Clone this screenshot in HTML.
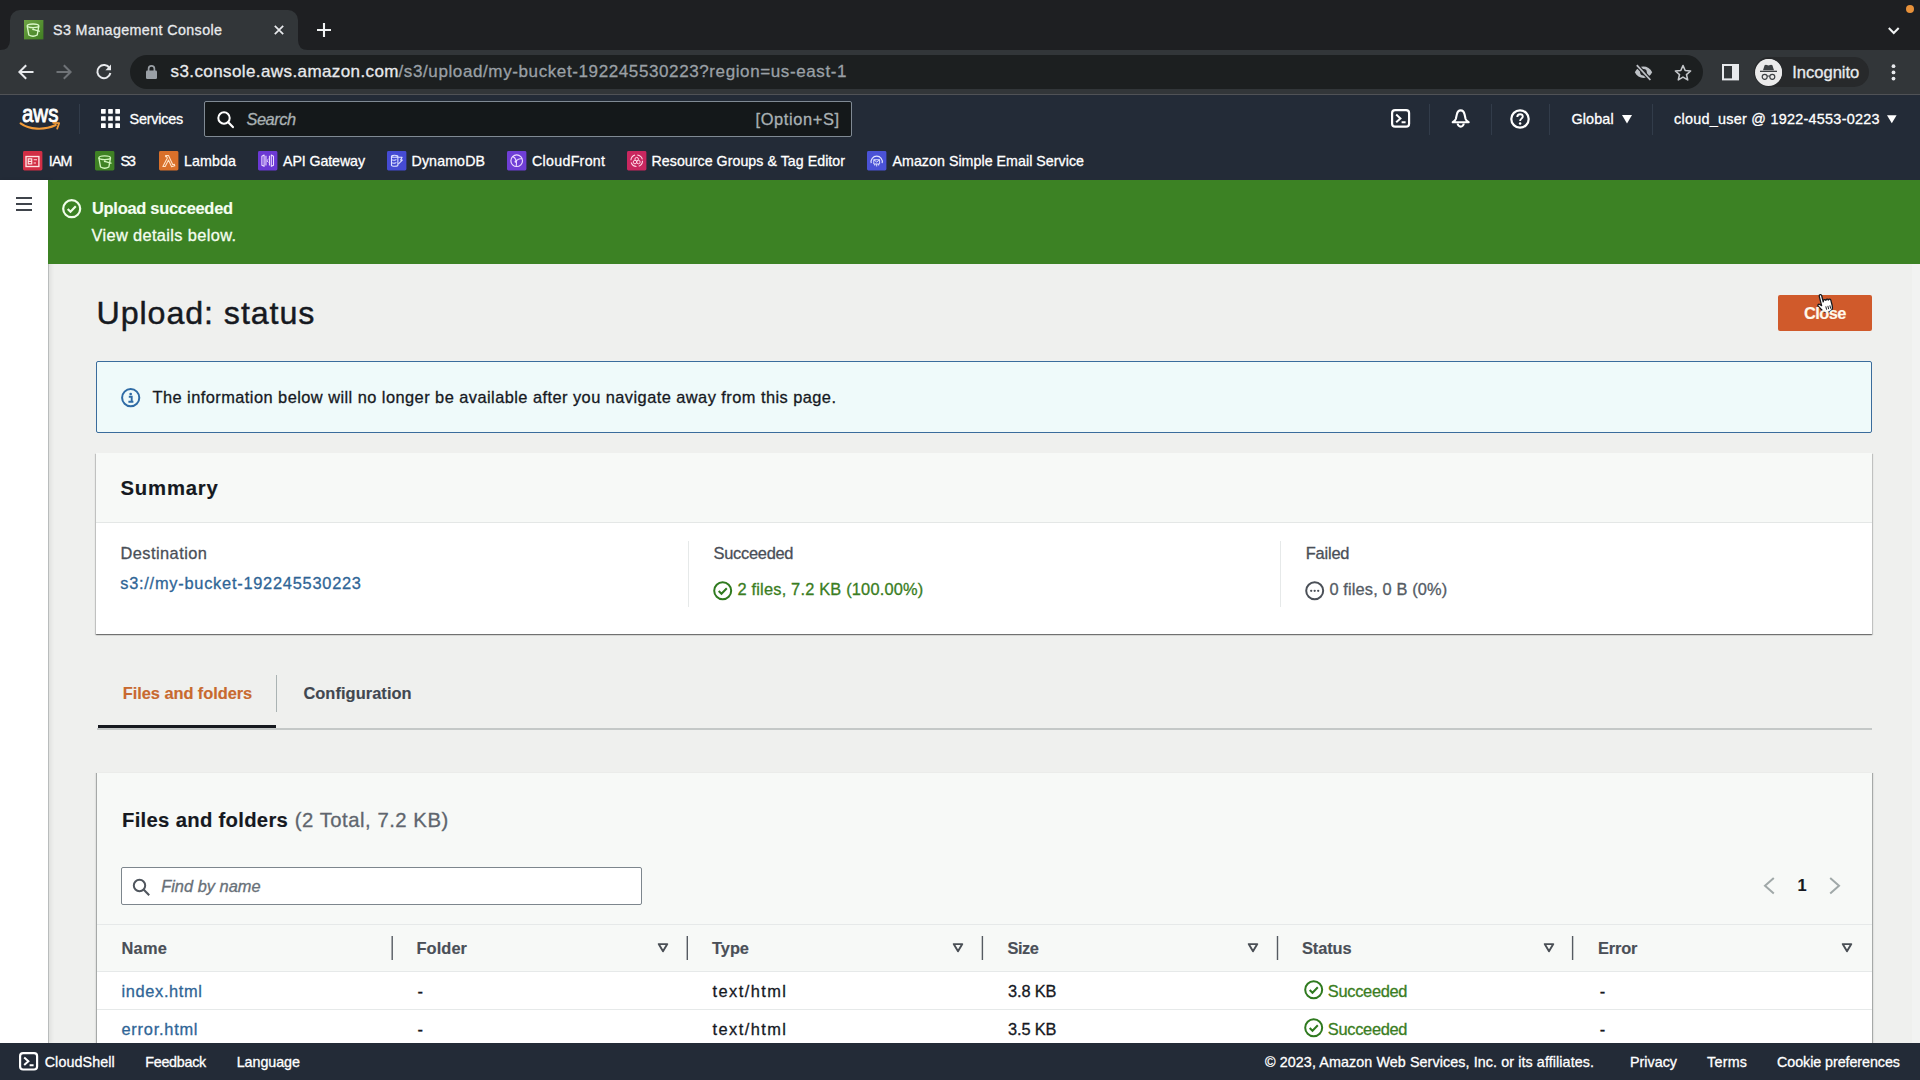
<!DOCTYPE html>
<html lang="en">
<head>
<meta charset="utf-8">
<title>S3 Management Console</title>
<style>
*{box-sizing:border-box;margin:0;padding:0}
html,body{width:1920px;height:1080px;overflow:hidden;background:#eff0ee;font-family:"Liberation Sans",sans-serif}
.b{position:absolute}
.t{position:absolute;white-space:pre;font-family:"Liberation Sans",sans-serif}
svg{position:absolute;overflow:visible}
</style>
</head>
<body>
<!-- ===== Chrome browser frame ===== -->
<div class="b" id="tabstrip" style="left:0;top:0;width:1920px;height:50px;background:#1e1f22"></div>
<div class="b" id="tab" style="left:10px;top:10px;width:288px;height:40px;background:#323639;border-radius:10px 10px 0 0"></div>
<div class="b" id="toolbar" style="left:0;top:50px;width:1920px;height:45px;background:#323639;border-bottom:1px solid #505256"></div>
<div class="b" id="omnibox" style="left:130px;top:55px;width:1573px;height:34px;border-radius:17px;background:#1c1f20"></div>
<div class="b" id="incog" style="left:1754px;top:57px;width:115px;height:30px;border-radius:15px;background:#27292b"></div>
<div class="b" id="incogc" style="left:1755.5px;top:59px;width:26px;height:26px;border-radius:13px;background:#e8eaed"></div>

<!-- ===== AWS nav ===== -->
<div class="b" id="awsnav" style="left:0;top:95px;width:1920px;height:85px;background:#232b37"></div>
<div class="b" id="search" style="left:204px;top:101px;width:647.500px;height:36px;background:#14181a;border:1px solid #808a94;border-radius:2px"></div>

<!-- ===== page ===== -->
<div class="b" id="sidebar" style="left:0;top:180px;width:49px;height:863px;background:#fff;border-right:1px solid #b9bcbc;box-shadow:2px 0 4px rgba(0,0,0,.07)"></div>
<div class="b" id="flash" style="left:48px;top:180px;width:1872px;height:84px;background:#3c8224"></div>
<div class="b" id="closebtn" style="left:1778px;top:295px;width:94px;height:36px;background:#d05a2b;border-radius:2px"></div>
<div class="b" id="info" style="left:96px;top:361px;width:1776px;height:72px;background:#effafa;border:1px solid #3a6c9c;border-radius:2px"></div>

<div class="b" id="sumcont" style="left:96px;top:453px;width:1776px;height:181px;background:#fff;box-shadow:0 1px 1px 0 rgba(0,0,0,.36),1px 1px 1px 0 rgba(0,0,0,.14),-1px 1px 1px 0 rgba(0,0,0,.14)"></div>
<div class="b" id="sumhead" style="left:96px;top:453px;width:1776px;height:70px;background:#f7f9f7;border-bottom:1px solid #e4e7e6"></div>
<div class="b" style="left:688px;top:541px;width:1px;height:66px;background:#e6e9e9"></div>
<div class="b" style="left:1280px;top:541px;width:1px;height:66px;background:#e6e9e9"></div>

<!-- tabs -->
<div class="b" style="left:97px;top:728px;width:1775px;height:2px;background:#c4c8c7"></div>
<div class="b" style="left:98px;top:725px;width:178px;height:3px;background:#16191f"></div>
<div class="b" style="left:276px;top:675px;width:1px;height:37px;background:#aab3b3"></div>

<!-- files container -->
<div class="b" id="fcont" style="left:97px;top:773px;width:1775px;height:280px;background:#f7f9f7;box-shadow:-1px 0 0 0 #a6a9a8,1px 0 0 0 #a6a9a8,-2px 0 1px 0 rgba(0,0,0,.05),2px 0 1px 0 rgba(0,0,0,.05)"></div>
<div class="b" id="finput" style="left:121px;top:867px;width:521px;height:38px;background:#fff;border:1px solid #7d868d;border-radius:2px"></div>
<div class="b" style="left:97px;top:924px;width:1775px;height:1px;background:#e6e9e9"></div>
<div class="b" style="left:97px;top:971px;width:1775px;height:1px;background:#e6e9e9"></div>
<div class="b" style="left:97px;top:972px;width:1775px;height:71px;background:#fff"></div>
<div class="b" style="left:97px;top:1009px;width:1775px;height:1px;background:#e6e9e9"></div>
<!-- column dividers -->

<svg style="left:0;top:936px" width="1920" height="24" viewBox="0 0 1920 24"><path d="M392.2 0v24M687.3 0v24M982.4 0v24M1277.5 0v24M1572.6 0v24" stroke="#565b62" stroke-width="1.4" fill="none"/></svg>
<div class="b" style="left:1912px;top:264px;width:8px;height:779px;background:#f2f3f2"></div>
<!-- footer -->
<div class="b" id="footer" style="left:0;top:1043px;width:1920px;height:37px;background:#232b37"></div>

<!-- ===== Chrome icons ===== -->
<!-- tab bottom flares -->
<svg style="left:0;top:40px" width="310" height="10" viewBox="0 0 310 10"><path d="M0 10 Q10 10 10 0 L10 10Z M298 0 Q298 10 308 10 L298 10Z" fill="#323639"/></svg>
<!-- favicon S3 -->
<svg style="left:24px;top:20.200px" width="19.400" height="19.400" viewBox="0 0 20 20"><defs><linearGradient id="fg" x1="0" y1="0" x2="1" y2="1"><stop offset="0" stop-color="#6fa544"/><stop offset="1" stop-color="#3f7d22"/></linearGradient></defs><rect width="20" height="20" fill="url(#fg)"/><ellipse cx="9.300" cy="6" rx="6" ry="1.900" fill="none" stroke="#d9f7c8" stroke-width="1.400"/><path d="M3.300 6.200L5 15.500Q9.300 18 13.600 15.500L15.300 6.200" fill="none" stroke="#d9f7c8" stroke-width="1.400" stroke-linejoin="round"/><path d="M9.400 9.600l6.900 2.100" stroke="#d9f7c8" stroke-width="1.400" fill="none"/><circle cx="9.400" cy="9.600" r="1" fill="#d9f7c8"/></svg>
<!-- tab close -->
<svg style="left:273.5px;top:25px" width="10" height="10" viewBox="0 0 10 10"><path d="M.8.8l8.4 8.4M9.2.8L.8 9.2" stroke="#e8eaed" stroke-width="1.7" fill="none"/></svg>
<!-- new tab plus -->
<svg style="left:317px;top:23px" width="14" height="14" viewBox="0 0 14 14"><path d="M7 0v14M0 7h14" stroke="#f1f3f4" stroke-width="2.1" fill="none"/></svg>
<!-- tab search chevron -->
<svg style="left:1888px;top:26.5px" width="11.5" height="7.5" viewBox="0 0 11.5 7.5"><path d="M.8 1l4.95 5L10.7 1" stroke="#f1f3f4" stroke-width="2" fill="none"/></svg>
<!-- orange mic dot -->
<div class="b" style="left:1906.4px;top:5.4px;width:8px;height:8px;border-radius:4px;background:#e8913a"></div>
<!-- back -->
<svg style="left:18px;top:64px" width="16" height="16" viewBox="0 0 16 16"><path d="M15.5 8H1.6M8.2 1.2L1.4 8l6.8 6.8" stroke="#e8eaed" stroke-width="2" fill="none"/></svg>
<!-- forward (disabled) -->
<svg style="left:56.3px;top:64px" width="16" height="16" viewBox="0 0 16 16"><path d="M.5 8h13.9M7.8 1.2L14.6 8l-6.8 6.8" stroke="#6f7377" stroke-width="2" fill="none"/></svg>
<!-- reload -->
<svg style="left:95px;top:63px" width="18" height="18" viewBox="0 0 18 18"><path d="M14.6 5.2A6.6 6.6 0 1 0 15.4 10" stroke="#e8eaed" stroke-width="2" fill="none"/><path d="M16 1.6v5.6h-5.6z" fill="#e8eaed"/></svg>
<!-- lock -->
<svg style="left:146px;top:65px" width="11" height="14" viewBox="0 0 11 14"><rect x="0" y="5.6" width="11" height="8.4" rx="1.2" fill="#9aa0a6"/><path d="M2.6 6V3.8a2.9 2.9 0 0 1 5.8 0V6" stroke="#9aa0a6" stroke-width="1.7" fill="none"/></svg>
<!-- eye off -->
<svg style="left:1634px;top:63.5px" width="19" height="17" viewBox="0 0 19 17"><path d="M.8 8.3C2.6 4.6 6 2.6 9.5 2.6s6.9 2 8.7 5.7c-1.8 3.7-5.2 5.7-8.7 5.7S2.6 12 .8 8.3z" fill="#bdc1c6"/><circle cx="9.5" cy="8.3" r="3.3" fill="#1f2023"/><circle cx="9.5" cy="8.3" r="1.7" fill="#bdc1c6"/><path d="M2.5.8l14 15.2" stroke="#1f2023" stroke-width="4"/><path d="M2.8 1.2l13.6 14.8" stroke="#bdc1c6" stroke-width="1.7"/></svg>
<!-- star -->
<svg style="left:1673.5px;top:64px" width="18" height="17" viewBox="0 0 18 17"><path d="M9 1.5l2.2 5 5.4.5-4.1 3.6 1.2 5.3L9 13.1l-4.7 2.8 1.2-5.3L1.4 7l5.4-.5z" fill="none" stroke="#c4c7ca" stroke-width="1.6" stroke-linejoin="round"/></svg>
<!-- side panel -->
<svg style="left:1722px;top:63.8px" width="17" height="16.4" viewBox="0 0 17 16.4"><rect x="1" y="1" width="15" height="14.4" fill="none" stroke="#e8eaed" stroke-width="2"/><rect x="10" y="1" width="6" height="14.4" fill="#e8eaed"/></svg>
<!-- incognito glyph -->
<svg style="left:1755.3px;top:58.6px" width="27" height="27" viewBox="0 0 27 27"><circle cx="13.5" cy="13.5" r="13.5" fill="#ebebeb"/><path d="M9.6 6.2l1.3-.5 2.6.8 2.6-.8 1.3.5 1.6 5H8z" fill="#3c4043"/><rect x="5" y="11.7" width="17" height="1.3" fill="#3c4043"/><circle cx="9.7" cy="17.8" r="2.5" fill="none" stroke="#3c4043" stroke-width="1.2"/><circle cx="17.3" cy="17.8" r="2.5" fill="none" stroke="#3c4043" stroke-width="1.2"/><path d="M12.2 17.3q1.3-.7 2.6 0" stroke="#3c4043" stroke-width="1.1" fill="none"/></svg>
<!-- kebab -->
<svg style="left:1890.9px;top:64px" width="5" height="17" viewBox="0 0 5 17"><circle cx="2.5" cy="2.2" r="1.9" fill="#e8eaed"/><circle cx="2.5" cy="8.4" r="1.9" fill="#e8eaed"/><circle cx="2.5" cy="14.6" r="1.9" fill="#e8eaed"/></svg>

<!-- ===== AWS nav icons ===== -->
<!-- aws logo: text + smile -->
<span class="t" style="left:21.8px;top:98.9px;font-size:23.5px;line-height:30px;font-weight:400;letter-spacing:0;color:#fff;-webkit-text-stroke:.85px #fff;transform:scaleX(.87);transform-origin:0 0">aws</span>
<svg style="left:20px;top:121.5px" width="41" height="10" viewBox="0 0 41 10"><path d="M.6 1.4C9 7.6 24 8.6 35.8 3" stroke="#f29b38" stroke-width="2.1" fill="none" stroke-linecap="round"/><path d="M33.2.9l5.9.3-1.9 5.4" stroke="#f29b38" stroke-width="1.8" fill="none" stroke-linejoin="round" stroke-linecap="round"/></svg>
<div class="b" style="left:79px;top:104px;width:1px;height:30px;background:#323c4a"></div>
<!-- services grid -->
<svg style="left:101px;top:109.2px" width="19" height="19" viewBox="0 0 19 19"><g fill="#fff"><rect x="0" y="0" width="4.7" height="4.7" rx=".6"/><rect x="7.15" y="0" width="4.7" height="4.7" rx=".6"/><rect x="14.3" y="0" width="4.7" height="4.7" rx=".6"/><rect x="0" y="7.15" width="4.7" height="4.7" rx=".6"/><rect x="7.15" y="7.15" width="4.7" height="4.7" rx=".6"/><rect x="14.3" y="7.15" width="4.7" height="4.7" rx=".6"/><rect x="0" y="14.3" width="4.7" height="4.7" rx=".6"/><rect x="7.15" y="14.3" width="4.7" height="4.7" rx=".6"/><rect x="14.3" y="14.3" width="4.7" height="4.7" rx=".6"/></g></svg>
<!-- nav search icon -->
<svg style="left:216px;top:110px" width="19" height="19" viewBox="0 0 19 19"><circle cx="8" cy="8" r="5.7" fill="none" stroke="#fff" stroke-width="2"/><path d="M12.200 12.200l4.700 4.900" stroke="#fff" stroke-width="2.200" stroke-linecap="round"/></svg>
<!-- cloudshell -->
<svg style="left:1391px;top:109.4px" width="19.2" height="18.8" viewBox="0 0 19.2 18.8"><rect x="1.1" y="1.1" width="17" height="16.6" rx="3" fill="none" stroke="#fff" stroke-width="2.2"/><path d="M5.2 5.6l4.2 3.8-4.2 3.8M10.6 13.3h4" stroke="#fff" stroke-width="2" fill="none"/></svg>
<div class="b" style="left:1429px;top:104px;width:1px;height:31px;background:#323c4a"></div>
<!-- bell -->
<svg style="left:1450.8px;top:108.7px" width="19.4" height="19.6" viewBox="0 0 19.4 19.6"><path d="M9.700 1.400C7.400 1.400 6.300 3.200 5.800 5.600L4.800 10C4.400 11.300 3.200 12.300 1.700 13.200H17.700C16.200 12.300 15 11.300 14.600 10L13.600 5.600C13.100 3.200 12 1.400 9.700 1.400Z" fill="none" stroke="#fff" stroke-width="2.1" stroke-linejoin="round"/><path d="M6.7 14.4a3 3.2 0 0 0 6 0" fill="none" stroke="#fff" stroke-width="2.1"/></svg>
<div class="b" style="left:1490.6px;top:104px;width:1px;height:31px;background:#323c4a"></div>
<!-- help -->
<svg style="left:1510.3px;top:109.2px" width="20" height="20" viewBox="0 0 20 20"><circle cx="10" cy="10" r="8.7" fill="none" stroke="#fff" stroke-width="2.2"/><path d="M7.3 7.9c0-1.7 1.2-2.7 2.8-2.7s2.7 1 2.7 2.4c0 2-2.7 2.1-2.7 4.3" fill="none" stroke="#fff" stroke-width="1.9"/><circle cx="10.1" cy="14.6" r="1.25" fill="#fff"/></svg>
<div class="b" style="left:1549.2px;top:104px;width:1px;height:31px;background:#323c4a"></div>
<svg style="left:1621.5px;top:114.5px" width="10" height="8.5" viewBox="0 0 10 8.5"><path d="M0 0h10L5 8.5z" fill="#fff"/></svg>
<div class="b" style="left:1651.7px;top:104px;width:1px;height:31px;background:#323c4a"></div>
<svg style="left:1887.300px;top:114.500px" width="9.600" height="8.500" viewBox="0 0 10 8.5"><path d="M0 0h10L5 8.5z" fill="#fff"/></svg>

<!-- ===== favorites icons ===== -->
<svg style="left:23.1px;top:151px" width="19.4" height="19.4" viewBox="0 0 20 20"><rect width="20" height="20" rx="1.5" fill="#d22e45"/><rect x="3.100" y="5.700" width="13.300" height="10.300" fill="none" stroke="#ffe3e3" stroke-width="1.400"/><path d="M5.400 8.200h3.600v5H5.400zM5.400 10.700h3.600M11 9h3.400M11 12.400h2.400" stroke="#ffe3e3" stroke-width="1.2" fill="none"/></svg>
<svg style="left:95.200px;top:151px" width="19.400" height="19.400" viewBox="0 0 20 20"><rect width="20" height="20" rx="1.500" fill="#3f8224"/><g transform="translate(.7 1)"><ellipse cx="9.300" cy="6" rx="6" ry="1.900" fill="none" stroke="#d2f5bd" stroke-width="1.400"/><path d="M3.300 6.200L5 15.500Q9.300 18 13.600 15.500L15.300 6.200" fill="none" stroke="#d2f5bd" stroke-width="1.400" stroke-linejoin="round"/><path d="M9.400 9.600l6.900 2.100" stroke="#d2f5bd" stroke-width="1.400" fill="none"/><circle cx="9.400" cy="9.600" r="1" fill="#d2f5bd"/></g></svg>
<svg style="left:158.5px;top:151px" width="19.4" height="19.4" viewBox="0 0 20 20"><rect width="20" height="20" rx="1.5" fill="#d9702a"/><path d="M6.8 4.6h3l4.4 9.6 1.6-.5.5 1.6-3.3 1-3.2-7-3.4 6.7H4l4.6-8.9-.7-1.3H6.8z" fill="none" stroke="#ffe2c6" stroke-width="1.1" stroke-linejoin="round"/></svg>
<svg style="left:257.8px;top:151px" width="19.4" height="19.4" viewBox="0 0 20 20"><rect width="20" height="20" rx="1.5" fill="#6b38d4"/><path d="M6.3 4.2L4 5.4v9.2l2.3 1.2zM13.7 4.2L16 5.4v9.2l-2.3 1.2zM8.2 5v10M11.8 5v10" stroke="#ecdcff" stroke-width="1.1" fill="none" stroke-linejoin="round"/><path d="M10.8 8.3L9.1 10l1.7 1.7" stroke="#ecdcff" stroke-width="1" fill="none"/></svg>
<svg style="left:387px;top:151px" width="19.4" height="19.4" viewBox="0 0 20 20"><rect width="20" height="20" rx="1.5" fill="#454bd3"/><path d="M4.6 5.4c0-1.4 6.6-1.4 6.6 0v9.2c0 1.4-6.6 1.4-6.6 0zM4.6 5.4c0 1.4 6.6 1.4 6.6 0M4.6 8.6c0 1.3 4.8 1.3 4.8 0M4.6 11.7c0 1.3 4.8 1.3 4.8 0" stroke="#dfe2ff" stroke-width="1.1" fill="none"/><path d="M11.4 6.5h4.2l-1.6 2.8h1.8l-4.2 4.2" stroke="#dfe2ff" stroke-width="1.1" fill="none" stroke-linejoin="round"/></svg>
<svg style="left:506.7px;top:151px" width="19.4" height="19.4" viewBox="0 0 20 20"><rect width="20" height="20" rx="1.5" fill="#6f3ed6"/><circle cx="10" cy="10" r="6" fill="none" stroke="#ecdcff" stroke-width="1.2"/><path d="M6 5.6c3 1.5 4.5 4.4 3.5 10.2M15.6 8c-3.4-.4-5.6 1-6.6 3.4" stroke="#ecdcff" stroke-width="1.1" fill="none"/><circle cx="9" cy="11" r="1.2" fill="#ecdcff"/></svg>
<svg style="left:626.5px;top:151px" width="19.4" height="19.4" viewBox="0 0 20 20"><rect width="20" height="20" rx="1.5" fill="#c9275f"/><circle cx="10" cy="10" r="6" fill="none" stroke="#ffd9e6" stroke-width="1.1" stroke-dasharray="7 2.4"/><circle cx="10" cy="8.4" r="1.8" fill="none" stroke="#ffd9e6" stroke-width="1"/><circle cx="8.2" cy="11.4" r="1.8" fill="none" stroke="#ffd9e6" stroke-width="1"/><circle cx="11.8" cy="11.4" r="1.8" fill="none" stroke="#ffd9e6" stroke-width="1"/></svg>
<svg style="left:867px;top:151px" width="19.4" height="19.4" viewBox="0 0 20 20"><rect width="20" height="20" rx="1.5" fill="#4a52d6"/><path d="M4.4 12.6a5.8 5.8 0 1 1 11.2 0" fill="none" stroke="#dfe2ff" stroke-width="1.2"/><path d="M7 9h6v4.4H7zM7 9l3 2.4L13 9M8 15v-1.6M10 16v-2.6M12 15v-1.6" stroke="#dfe2ff" stroke-width="1" fill="none"/></svg>

<!-- ===== page icons ===== -->
<!-- hamburger -->
<div class="b" style="left:16px;top:197px;width:16.2px;height:2.1px;background:#3f444b"></div>
<div class="b" style="left:16px;top:203px;width:16.2px;height:2.1px;background:#3f444b"></div>
<div class="b" style="left:16px;top:209px;width:16.2px;height:2.1px;background:#3f444b"></div>
<!-- flash check -->
<svg style="left:62.2px;top:199.1px" width="19.4" height="19.4" viewBox="0 0 19.4 19.4"><circle cx="9.7" cy="9.7" r="8.5" fill="none" stroke="#f1fdea" stroke-width="2.2"/><path d="M5.7 10l2.8 2.8 5.3-5.5" fill="none" stroke="#f1fdea" stroke-width="2.2"/></svg>
<!-- info -->
<svg style="left:121px;top:387.600px" width="19.4" height="19.4" viewBox="0 0 19.4 19.4"><circle cx="9.7" cy="9.7" r="8.6" fill="none" stroke="#2f6ba5" stroke-width="2"/><circle cx="9.7" cy="6" r="1.35" fill="#2f6ba5"/><path d="M7.8 8.7h2.9v4.8M7.4 13.7h5" stroke="#2f6ba5" stroke-width="1.9" fill="none"/></svg>
<!-- summary success -->
<svg style="left:713px;top:580.7px" width="19.4" height="19.4" viewBox="0 0 19.4 19.4"><circle cx="9.7" cy="9.7" r="8.5" fill="none" stroke="#2f7a1f" stroke-width="2"/><path d="M5.7 10l2.8 2.8 5.3-5.5" fill="none" stroke="#2f7a1f" stroke-width="2"/></svg>
<!-- summary pending -->
<svg style="left:1304.9px;top:580.6px" width="19.4" height="19.4" viewBox="0 0 19.4 19.4"><circle cx="9.7" cy="9.7" r="8.5" fill="none" stroke="#4b5058" stroke-width="2"/><circle cx="6.200" cy="9.800" r="1.150" fill="#4b5058"/><circle cx="9.700" cy="9.800" r="1.150" fill="#4b5058"/><circle cx="13.200" cy="9.800" r="1.150" fill="#4b5058"/></svg>
<!-- find search -->
<svg style="left:131.5px;top:877.5px" width="19" height="19" viewBox="0 0 19 19"><circle cx="7.5" cy="7.5" r="5.7" fill="none" stroke="#50565e" stroke-width="2"/><path d="M11.6 11.6l5.6 5.6" stroke="#50565e" stroke-width="2.1"/></svg>
<!-- pagination -->
<svg style="left:1762.5px;top:877px" width="12" height="17.5" viewBox="0 0 12 17.5"><path d="M10.8 1L2 8.75l8.8 7.75" fill="none" stroke="#a0a8a8" stroke-width="2"/></svg>
<svg style="left:1828.5px;top:877px" width="12" height="17.5" viewBox="0 0 12 17.5"><path d="M1.2 1L10 8.75 1.2 16.5" fill="none" stroke="#a0a8a8" stroke-width="2"/></svg>
<!-- sort triangles -->
<svg style="left:657px;top:943px" width="12" height="10" viewBox="0 0 12 10"><path d="M1.7 1.1h8.6L6 8.3z" fill="none" stroke="#4a4f55" stroke-width="1.9" stroke-linejoin="round"/></svg>
<svg style="left:952px;top:943px" width="12" height="10" viewBox="0 0 12 10"><path d="M1.7 1.1h8.6L6 8.3z" fill="none" stroke="#4a4f55" stroke-width="1.9" stroke-linejoin="round"/></svg>
<svg style="left:1247px;top:943px" width="12" height="10" viewBox="0 0 12 10"><path d="M1.7 1.1h8.6L6 8.3z" fill="none" stroke="#4a4f55" stroke-width="1.9" stroke-linejoin="round"/></svg>
<svg style="left:1543px;top:943px" width="12" height="10" viewBox="0 0 12 10"><path d="M1.7 1.1h8.6L6 8.3z" fill="none" stroke="#4a4f55" stroke-width="1.9" stroke-linejoin="round"/></svg>
<svg style="left:1840.6px;top:943px" width="12" height="10" viewBox="0 0 12 10"><path d="M1.7 1.1h8.6L6 8.3z" fill="none" stroke="#4a4f55" stroke-width="1.9" stroke-linejoin="round"/></svg>
<!-- row success icons -->
<svg style="left:1303.6px;top:980.1px" width="19.4" height="19.4" viewBox="0 0 19.4 19.4"><circle cx="9.7" cy="9.7" r="8.5" fill="none" stroke="#2f7a1f" stroke-width="2"/><path d="M5.7 10l2.8 2.8 5.3-5.5" fill="none" stroke="#2f7a1f" stroke-width="2"/></svg>
<svg style="left:1303.6px;top:1018.4px" width="19.4" height="19.4" viewBox="0 0 19.4 19.4"><circle cx="9.7" cy="9.7" r="8.5" fill="none" stroke="#2f7a1f" stroke-width="2"/><path d="M5.7 10l2.8 2.8 5.3-5.5" fill="none" stroke="#2f7a1f" stroke-width="2"/></svg>
<!-- footer cloudshell -->
<svg style="left:19.2px;top:1052.4px" width="19.200" height="18.600" viewBox="0 0 19.2 18.6"><rect x="1.100" y="1.100" width="17" height="16.400" rx="3" fill="none" stroke="#fff" stroke-width="2.200"/><path d="M5.200 5.500l4.200 3.800-4.200 3.800M10.600 13.200h4" stroke="#fff" stroke-width="2" fill="none"/></svg>
<!-- pointer cursor -->
<svg style="left:1815px;top:292.500px" width="20" height="22" viewBox="0 0 20 22"><g transform="rotate(-14 10 11)"><path d="M6.300 2.200c0-1.800 2.500-1.800 2.500 0v6.200l.4-.8c.5-1.400 2.300-1.200 2.400.1l.3-.3c.8-1.100 2.300-.7 2.300.5l.3-.2c.9-.8 2.100-.3 2.100.9v5.500c0 3.400-1.600 5.600-5.200 5.600-2.900 0-4.300-1.100-5.700-3.400L2.900 11.600c-.8-1.400.8-2.500 1.900-1.400l1.500 1.600z" fill="#fff" stroke="#16191f" stroke-width="1.300" stroke-linejoin="round"/><path d="M10.200 13.500v3.400M12.300 13.500v3.400M14.400 13.500v3.400" stroke="#16191f" stroke-width=".9"/></g></svg>

<span class="t" style="left:53px;top:20.05px;font-size:14.3px;line-height:20px;letter-spacing:0.383px;color:#e8eaed;-webkit-text-stroke:0.3px #e8eaed;">S3 Management Console</span>
<span class="t" style="left:170.5px;top:59.51px;font-size:17px;line-height:24px;letter-spacing:0.405px;color:#e8eaed;-webkit-text-stroke:0.3px #e8eaed;">s3.console.aws.amazon.com</span>
<span class="t" style="left:398.5px;top:59.51px;font-size:17px;line-height:24px;letter-spacing:0.608px;color:#9aa0a6;-webkit-text-stroke:0.3px #9aa0a6;">/s3/upload/my-bucket-192245530223?region=us-east-1</span>
<span class="t" style="left:1792.3px;top:61.15px;font-size:16.6px;line-height:23px;letter-spacing:-0.045px;color:#e8eaed;-webkit-text-stroke:0.3px #e8eaed;">Incognito</span>
<span class="t" style="left:129.6px;top:109.11px;font-size:14.4px;line-height:20px;letter-spacing:-0.227px;color:#ffffff;-webkit-text-stroke:0.3px #ffffff;">Services</span>
<span class="t" style="left:246.5px;top:108.02px;font-size:16.4px;line-height:23px;letter-spacing:-0.487px;color:#a9b1b3;font-style:italic;-webkit-text-stroke:0.3px #a9b1b3;">Search</span>
<span class="t" style="left:755.5px;top:108.02px;font-size:16.4px;line-height:23px;letter-spacing:0.622px;color:#a9b1b3;-webkit-text-stroke:0.3px #a9b1b3;">[Option+S]</span>
<span class="t" style="left:1571.4px;top:109.11px;font-size:14.4px;line-height:20px;letter-spacing:0.118px;color:#ffffff;-webkit-text-stroke:0.3px #ffffff;">Global</span>
<span class="t" style="left:1674px;top:109.11px;font-size:14.4px;line-height:20px;letter-spacing:0.264px;color:#ffffff;-webkit-text-stroke:0.3px #ffffff;">cloud_user @ 1922-4553-0223</span>
<span class="t" style="left:48.75px;top:150.98px;font-size:14.2px;line-height:20px;letter-spacing:-0.792px;color:#ffffff;-webkit-text-stroke:0.3px #ffffff;">IAM</span>
<span class="t" style="left:120.5px;top:150.98px;font-size:14.2px;line-height:20px;letter-spacing:-1.859px;color:#ffffff;-webkit-text-stroke:0.3px #ffffff;">S3</span>
<span class="t" style="left:184px;top:150.98px;font-size:14.2px;line-height:20px;letter-spacing:0.144px;color:#ffffff;-webkit-text-stroke:0.3px #ffffff;">Lambda</span>
<span class="t" style="left:283px;top:150.98px;font-size:14.2px;line-height:20px;letter-spacing:-0.081px;color:#ffffff;-webkit-text-stroke:0.3px #ffffff;">API Gateway</span>
<span class="t" style="left:411.5px;top:150.98px;font-size:14.2px;line-height:20px;letter-spacing:0.136px;color:#ffffff;-webkit-text-stroke:0.3px #ffffff;">DynamoDB</span>
<span class="t" style="left:532px;top:150.98px;font-size:14.2px;line-height:20px;letter-spacing:0.312px;color:#ffffff;-webkit-text-stroke:0.3px #ffffff;">CloudFront</span>
<span class="t" style="left:651.5px;top:150.98px;font-size:14.2px;line-height:20px;letter-spacing:0.050px;color:#ffffff;-webkit-text-stroke:0.3px #ffffff;">Resource Groups &amp; Tag Editor</span>
<span class="t" style="left:892.5px;top:150.98px;font-size:14.2px;line-height:20px;letter-spacing:0.056px;color:#ffffff;-webkit-text-stroke:0.3px #ffffff;">Amazon Simple Email Service</span>
<span class="t" style="left:92px;top:197.42px;font-size:16.4px;line-height:23px;letter-spacing:-0.255px;color:#f4fdf0;font-weight:700;-webkit-text-stroke:0.15px #f4fdf0;">Upload succeeded</span>
<span class="t" style="left:91.5px;top:223.62px;font-size:16.4px;line-height:23px;letter-spacing:0.350px;color:#f4fdf0;-webkit-text-stroke:0.3px #f4fdf0;">View details below.</span>
<span class="t" style="left:96.5px;top:290.74px;font-size:32.2px;line-height:45px;letter-spacing:0.933px;color:#16191f;-webkit-text-stroke:0.45px #16191f;">Upload: status</span>
<span class="t" style="left:1804px;top:302.12px;font-size:16.4px;line-height:23px;letter-spacing:-0.585px;color:#fff8ea;font-weight:700;-webkit-text-stroke:0.15px #fff8ea;">Close</span>
<span class="t" style="left:152.5px;top:385.82px;font-size:16.4px;line-height:23px;letter-spacing:0.447px;color:#16191f;-webkit-text-stroke:0.3px #16191f;">The information below will no longer be available after you navigate away from this page.</span>
<span class="t" style="left:120.5px;top:473.77px;font-size:20.3px;line-height:28px;letter-spacing:0.810px;color:#16191f;font-weight:700;-webkit-text-stroke:0.15px #16191f;">Summary</span>
<span class="t" style="left:120.5px;top:542.02px;font-size:16.4px;line-height:23px;letter-spacing:0.438px;color:#4a4f57;-webkit-text-stroke:0.3px #4a4f57;">Destination</span>
<span class="t" style="left:120.2px;top:571.57px;font-size:16.4px;line-height:23px;letter-spacing:0.745px;color:#2f6596;-webkit-text-stroke:0.3px #2f6596;">s3://my-bucket-192245530223</span>
<span class="t" style="left:713.5px;top:541.72px;font-size:16.4px;line-height:23px;letter-spacing:-0.254px;color:#4a4f57;-webkit-text-stroke:0.3px #4a4f57;">Succeeded</span>
<span class="t" style="left:737.5px;top:577.57px;font-size:16.4px;line-height:23px;letter-spacing:0.187px;color:#3a7d22;-webkit-text-stroke:0.3px #3a7d22;">2 files, 7.2 KB (100.00%)</span>
<span class="t" style="left:1305.75px;top:541.72px;font-size:16.4px;line-height:23px;letter-spacing:-0.181px;color:#4a4f57;-webkit-text-stroke:0.3px #4a4f57;">Failed</span>
<span class="t" style="left:1329.4px;top:577.57px;font-size:16.4px;line-height:23px;letter-spacing:0.138px;color:#545b64;-webkit-text-stroke:0.3px #545b64;">0 files, 0 B (0%)</span>
<span class="t" style="left:122.8px;top:682.22px;font-size:16.4px;line-height:23px;letter-spacing:-0.053px;color:#c8692f;font-weight:700;-webkit-text-stroke:0.15px #c8692f;">Files and folders</span>
<span class="t" style="left:303.4px;top:682.22px;font-size:16.4px;line-height:23px;letter-spacing:0.064px;color:#414750;font-weight:700;-webkit-text-stroke:0.15px #414750;">Configuration</span>
<span class="t" style="left:122px;top:806.17px;font-size:20.3px;line-height:28px;letter-spacing:0.296px;color:#16191f;font-weight:700;-webkit-text-stroke:0.15px #16191f;">Files and folders</span>
<span class="t" style="left:294.8px;top:806.17px;font-size:20.3px;line-height:28px;letter-spacing:0.521px;color:#5f666e;-webkit-text-stroke:0.3px #5f666e;">(2 Total, 7.2 KB)</span>
<span class="t" style="left:161.2px;top:874.82px;font-size:16.4px;line-height:23px;letter-spacing:0.008px;color:#687078;font-style:italic;-webkit-text-stroke:0.3px #687078;">Find by name</span>
<span class="t" style="left:1797.6px;top:873.92px;font-size:16.4px;line-height:23px;letter-spacing:-1.325px;color:#16191f;font-weight:700;-webkit-text-stroke:0.15px #16191f;">1</span>
<span class="t" style="left:121.5px;top:936.92px;font-size:16.4px;line-height:23px;letter-spacing:0.281px;color:#4a4f57;font-weight:700;-webkit-text-stroke:0.15px #4a4f57;">Name</span>
<span class="t" style="left:416.5px;top:936.92px;font-size:16.4px;line-height:23px;letter-spacing:0.081px;color:#4a4f57;font-weight:700;-webkit-text-stroke:0.15px #4a4f57;">Folder</span>
<span class="t" style="left:712px;top:936.92px;font-size:16.4px;line-height:23px;letter-spacing:-0.016px;color:#4a4f57;font-weight:700;-webkit-text-stroke:0.15px #4a4f57;">Type</span>
<span class="t" style="left:1007.5px;top:936.92px;font-size:16.4px;line-height:23px;letter-spacing:-0.438px;color:#4a4f57;font-weight:700;-webkit-text-stroke:0.15px #4a4f57;">Size</span>
<span class="t" style="left:1302px;top:936.92px;font-size:16.4px;line-height:23px;letter-spacing:-0.099px;color:#4a4f57;font-weight:700;-webkit-text-stroke:0.15px #4a4f57;">Status</span>
<span class="t" style="left:1598px;top:936.92px;font-size:16.4px;line-height:23px;letter-spacing:-0.173px;color:#4a4f57;font-weight:700;-webkit-text-stroke:0.15px #4a4f57;">Error</span>
<span class="t" style="left:121.5px;top:979.72px;font-size:16.4px;line-height:23px;letter-spacing:0.644px;color:#2f6596;-webkit-text-stroke:0.3px #2f6596;">index.html</span>
<span class="t" style="left:417.5px;top:979.72px;font-size:16.4px;line-height:23px;letter-spacing:0.031px;color:#16191f;-webkit-text-stroke:0.3px #16191f;">-</span>
<span class="t" style="left:712.5px;top:979.72px;font-size:16.4px;line-height:23px;letter-spacing:1.445px;color:#16191f;-webkit-text-stroke:0.3px #16191f;">text/html</span>
<span class="t" style="left:1008px;top:979.72px;font-size:16.4px;line-height:23px;letter-spacing:-0.144px;color:#16191f;-webkit-text-stroke:0.3px #16191f;">3.8 KB</span>
<span class="t" style="left:1327.8px;top:979.72px;font-size:16.4px;line-height:23px;letter-spacing:-0.291px;color:#3a7d22;-webkit-text-stroke:0.3px #3a7d22;">Succeeded</span>
<span class="t" style="left:1599.8px;top:979.72px;font-size:16.4px;line-height:23px;letter-spacing:0.131px;color:#16191f;-webkit-text-stroke:0.3px #16191f;">-</span>
<span class="t" style="left:121.5px;top:1018.32px;font-size:16.4px;line-height:23px;letter-spacing:0.752px;color:#2f6596;-webkit-text-stroke:0.3px #2f6596;">error.html</span>
<span class="t" style="left:417.5px;top:1018.32px;font-size:16.4px;line-height:23px;letter-spacing:0.031px;color:#16191f;-webkit-text-stroke:0.3px #16191f;">-</span>
<span class="t" style="left:712.5px;top:1018.32px;font-size:16.4px;line-height:23px;letter-spacing:1.445px;color:#16191f;-webkit-text-stroke:0.3px #16191f;">text/html</span>
<span class="t" style="left:1008px;top:1018.32px;font-size:16.4px;line-height:23px;letter-spacing:-0.144px;color:#16191f;-webkit-text-stroke:0.3px #16191f;">3.5 KB</span>
<span class="t" style="left:1327.8px;top:1018.32px;font-size:16.4px;line-height:23px;letter-spacing:-0.291px;color:#3a7d22;-webkit-text-stroke:0.3px #3a7d22;">Succeeded</span>
<span class="t" style="left:1599.8px;top:1018.32px;font-size:16.4px;line-height:23px;letter-spacing:0.131px;color:#16191f;-webkit-text-stroke:0.3px #16191f;">-</span>
<span class="t" style="left:44.7px;top:1052.05px;font-size:14.3px;line-height:20px;letter-spacing:0.094px;color:#ffffff;-webkit-text-stroke:0.3px #ffffff;">CloudShell</span>
<span class="t" style="left:145.3px;top:1052.05px;font-size:14.3px;line-height:20px;letter-spacing:-0.271px;color:#ffffff;-webkit-text-stroke:0.3px #ffffff;">Feedback</span>
<span class="t" style="left:236.7px;top:1052.05px;font-size:14.3px;line-height:20px;letter-spacing:-0.046px;color:#ffffff;-webkit-text-stroke:0.3px #ffffff;">Language</span>
<span class="t" style="left:1265px;top:1052.05px;font-size:14.3px;line-height:20px;letter-spacing:0.100px;color:#ffffff;-webkit-text-stroke:0.3px #ffffff;">© 2023, Amazon Web Services, Inc. or its affiliates.</span>
<span class="t" style="left:1630px;top:1052.05px;font-size:14.3px;line-height:20px;letter-spacing:0.021px;color:#ffffff;-webkit-text-stroke:0.3px #ffffff;">Privacy</span>
<span class="t" style="left:1707px;top:1052.05px;font-size:14.3px;line-height:20px;letter-spacing:0.270px;color:#ffffff;-webkit-text-stroke:0.3px #ffffff;">Terms</span>
<span class="t" style="left:1777px;top:1052.05px;font-size:14.3px;line-height:20px;letter-spacing:-0.058px;color:#ffffff;-webkit-text-stroke:0.3px #ffffff;">Cookie preferences</span>
</body>
</html>
